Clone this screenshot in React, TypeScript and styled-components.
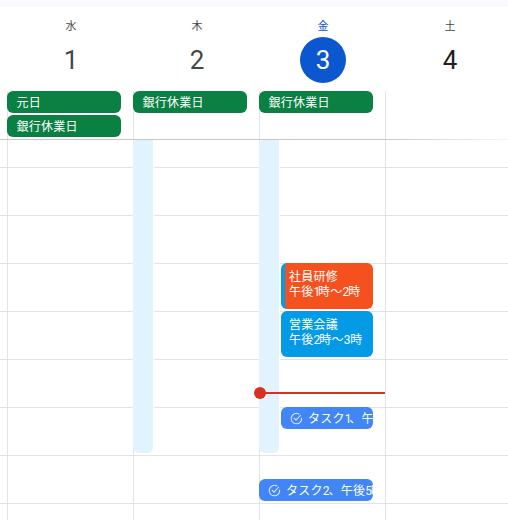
import React from "react";
import styled, { createGlobalStyle } from "styled-components";

const Global = createGlobalStyle`
  html, body { margin: 0; padding: 0; background: #fff; overflow: hidden; }
  body { font-family: "Noto Sans CJK JP", Roboto, sans-serif; }
`;

const Page = styled.div`
  width: 508px;
  height: 520px;
  overflow: hidden;
  display: flex;
  flex-direction: column;
  background: #fff;
`;
const TopBand = styled.div`
  height: 7px;
  background: #f8fafd;
  flex: none;
`;
const HeaderRow = styled.div`
  display: grid;
  grid-template-columns: 8px repeat(3, 126px) 128px;
  flex: none;
`;
const Columns = styled.div`
  display: grid;
  grid-template-columns: 7px repeat(3, 126px) 123px;
  flex: none;
`;
const HeaderCell = styled.div`
  height: 84px;
  display: flex;
  flex-direction: column;
  align-items: center;
`;
const Weekday = styled.div<{ $today?: boolean }>`
  margin-top: 11px;
  height: 14px;
  line-height: 14px;
  font-size: 11px;
  font-weight: 400;
  color: ${(p) => (p.$today ? "#0b57d0" : "#444746")};
`;
const DateNum = styled.div<{ $today?: boolean; $dark?: boolean }>`
  margin-top: 5px;
  width: 46px;
  height: 46px;
  border-radius: 50%;
  display: flex;
  align-items: center;
  justify-content: center;
  font-size: 26px;
  font-family: Roboto, sans-serif;
  background: ${(p) => (p.$today ? "#0b57d0" : "transparent")};
  color: ${(p) => (p.$today ? "#fff" : p.$dark ? "#1f1f1f" : "#444746")};
`;
const AllDayCell = styled.div`
  height: 48px;
  box-sizing: border-box;
  border-left: 1px solid #dfe3ea;
  display: flex;
  flex-direction: column;
  gap: 2px;
`;
const Chip = styled.div`
  height: 22px;
  margin-left: -1px;
  width: 114px;
  flex: none;
  border-radius: 6px;
  background: #0b8043;
  color: #fff;
  font-size: 12px;
  font-weight: 400;
  letter-spacing: 0.25px;
  line-height: 22px;
  padding-left: 9.5px;
  box-sizing: border-box;
`;
const Divider = styled.div`
  height: 1px;
  flex: none;
  background: linear-gradient(90deg, #c4c7c5 0, #c4c7c5 380px, #f2f3f4 500px);
`;
const GridArea = styled.div`
  flex: 1;
  display: grid;
  grid-template-columns: 7px repeat(3, 126px) 123px;
  background-image: linear-gradient(to bottom, transparent 47px, #e1e3e9 47px);
  background-size: 100% 48px;
  background-position: 0 -20px;
`;
const DayCol = styled.div`
  position: relative;
  border-left: 1px solid #dfe3ea;
`;
const Shade = styled.div`
  position: absolute;
  left: -1px;
  top: 0;
  width: 21px;
  height: 313px;
  box-sizing: border-box;
  background: #e1f3fd;
  border-right: 1px solid #fff;
  border-radius: 0 0 6px 6px;
`;
const Event = styled.div<{ $color: string; $top: number; $accent?: boolean }>`
  position: absolute;
  left: 21px;
  top: ${(p) => p.$top}px;
  width: 92px;
  height: 46px;
  box-sizing: border-box;
  padding: 5px 0 0 ${(p) => (p.$accent ? "4px" : "8px")};
  border-radius: 6px;
  background: ${(p) => p.$color};
  border-left: ${(p) => (p.$accent ? "4px solid #039be5" : "0")};
  color: #fff;
  font-size: 12px;
  font-weight: 400;
  letter-spacing: 0.25px;
  line-height: 15px;
  overflow: hidden;
  white-space: nowrap;
`;
const Digit = styled.span<{ $ls: number }>`
  font-family: Roboto, sans-serif;
  letter-spacing: ${(p) => p.$ls}px;
`;
const Task = styled.div<{ $top: number; $left: number; $width: number }>`
  position: absolute;
  left: ${(p) => p.$left}px;
  top: ${(p) => p.$top}px;
  width: ${(p) => p.$width}px;
  height: 22px;
  box-sizing: border-box;
  border-radius: 6px;
  background: #4285f4;
  color: #fff;
  font-size: 12px;
  font-weight: 400;
  letter-spacing: 0.25px;
  line-height: 22px;
  padding-left: 9px;
  display: flex;
  align-items: center;
  gap: 5px;
  overflow: hidden;
  white-space: nowrap;
`;
const TaskLabel = styled.span`
  flex: none;
`;
const NowLine = styled.div`
  position: absolute;
  left: -1px;
  top: 252px;
  width: 126px;
  height: 2px;
  background: #d93025;
`;
const NowDot = styled.div`
  position: absolute;
  left: -5px;
  top: -5px;
  width: 12px;
  height: 12px;
  border-radius: 50%;
  background: #d93025;
`;
const CheckSvg = styled.svg`
  flex: none;
`;

const CheckIcon = () => (
  <CheckSvg width="13" height="13" viewBox="0 0 24 24" fill="none">
    <path d="M21.5 11.2A9.7 9.7 0 1 1 16.5 3.6" stroke="#dbe7fd" strokeWidth="2" strokeLinecap="round" />
    <path d="M7.5 11.5l3.5 3.5 8.5-9" stroke="#dbe7fd" strokeWidth="2" strokeLinecap="round" strokeLinejoin="round" />
  </CheckSvg>
);

export default function App() {
  return (
    <Page>
      <Global />
      <TopBand />
      <HeaderRow>
        <div />
        <HeaderCell>
          <Weekday>水</Weekday>
          <DateNum>1</DateNum>
        </HeaderCell>
        <HeaderCell>
          <Weekday>木</Weekday>
          <DateNum>2</DateNum>
        </HeaderCell>
        <HeaderCell>
          <Weekday $today>金</Weekday>
          <DateNum $today>3</DateNum>
        </HeaderCell>
        <HeaderCell>
          <Weekday>土</Weekday>
          <DateNum $dark>4</DateNum>
        </HeaderCell>
      </HeaderRow>
      <Columns>
        <div />
        <AllDayCell>
          <Chip>元日</Chip>
          <Chip>銀行休業日</Chip>
        </AllDayCell>
        <AllDayCell>
          <Chip>銀行休業日</Chip>
        </AllDayCell>
        <AllDayCell>
          <Chip>銀行休業日</Chip>
        </AllDayCell>
        <AllDayCell />
      </Columns>
      <Divider />
      <GridArea>
        <div />
        <DayCol />
        <DayCol>
          <Shade />
        </DayCol>
        <DayCol>
          <Shade />
          <Event $color="#f4511e" $top={123} $accent>
            社員研修
            <br />
            午後<Digit $ls={-2.2}>1</Digit>時～<Digit $ls={-1}>2</Digit>時
          </Event>
          <Event $color="#039be5" $top={171}>
            営業会議
            <br />
            午後<Digit $ls={-1}>2</Digit>時～<Digit $ls={-0.25}>3</Digit>時
          </Event>
          <Task $top={267} $left={21} $width={92}>
            <CheckIcon />
            <TaskLabel>
              タスク<Digit $ls={-2.2}>1</Digit>、午後<Digit $ls={-1}>4</Digit>時
            </TaskLabel>
          </Task>
          <Task $top={339} $left={-1} $width={114}>
            <CheckIcon />
            <TaskLabel>
              タスク<Digit $ls={-1}>2</Digit>、午後<Digit $ls={-1}>5</Digit>時
            </TaskLabel>
          </Task>
          <NowLine>
            <NowDot />
          </NowLine>
        </DayCol>
        <DayCol />
      </GridArea>
    </Page>
  );
}
